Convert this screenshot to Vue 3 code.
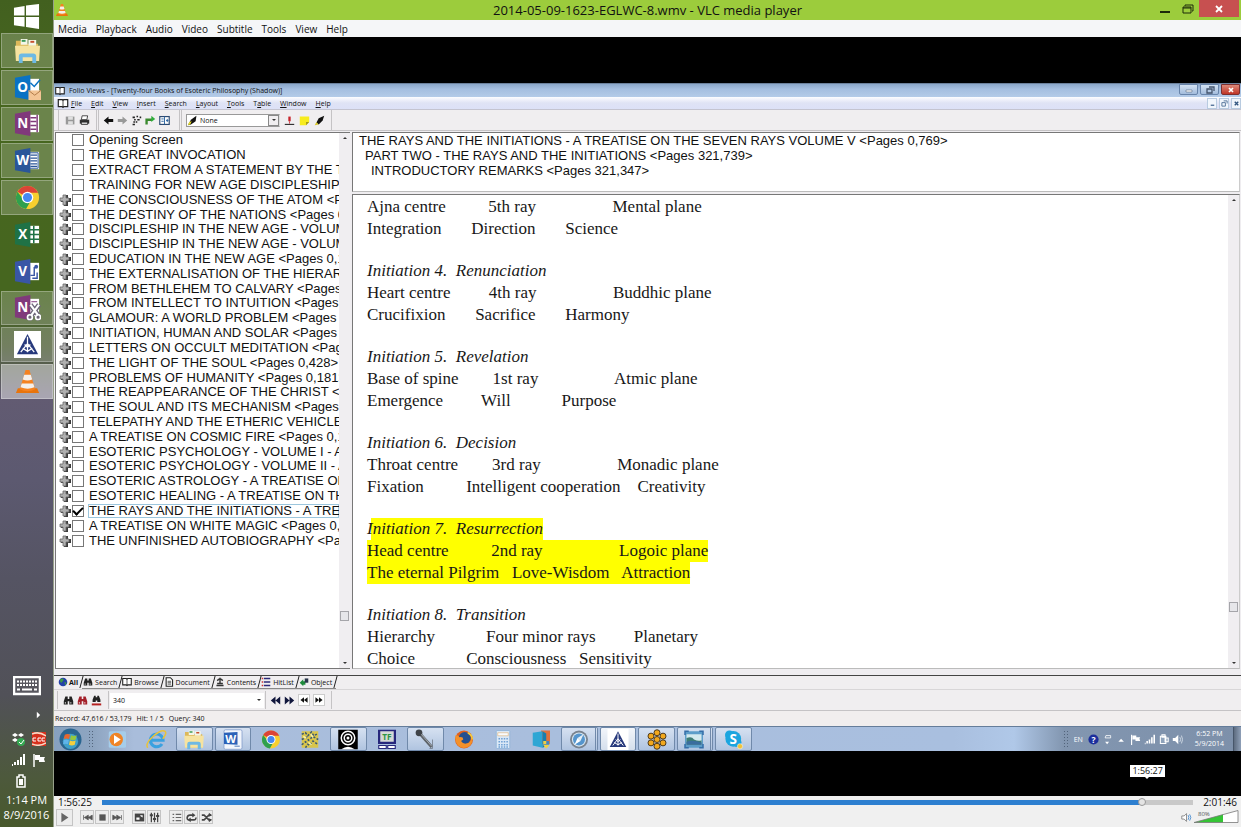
<script setup>
import { ref } from 'vue'

const tri = '<rect width="28" height="28" fill="#fff"/><path d="M14 3 25 24H3Z" fill="#27397c"/><path d="M14 6v16M14 13 7 22M14 13l7 9M9 18l5 3 5-3M11 14l3 3 3-3" stroke="#fff" stroke-width="1.3" fill="none"/>'
const cone = '<path d="M4 21h20l2 5H2Z" fill="#e8740c"/><path d="M12 2h4l6 20q-8 4-16 0Z" fill="#f58220"/><path d="M10.600 7h6.800l1.500 5q-5 2-9.800 0ZM8 16h12l1.200 4q-7 3-14.400 0Z" fill="#f4f0ec"/>'
const chrome = '<circle cx="14" cy="14" r="12" fill="#f7cf2e"/><path d="M14 14 3.600 8A12 12 0 0 1 24.400 8L25 9H14Z" fill="#dc4437"/><path d="M3.600 8A12 12 0 0 0 12.500 26L17.500 17 14 14 9 15Z" fill="#30a04e"/><circle cx="14" cy="14" r="6" fill="#fff"/><circle cx="14" cy="14" r="4.700" fill="#4688f1"/>'
const folder = '<path d="M2 4h8l2 3h13v18H2Z" fill="#dcb85a"/><path d="M7 2h7v6H7zM15 3h8v6h-8z" fill="#f4f6e8"/><path d="M8 3h4v2H8z" fill="#3c9a58"/><path d="M17 4h4v2h-4z" fill="#c8502e"/><path d="M1 9h26l-1 16H2Z" fill="#f6e3a0"/><path d="M5 27v-7q0-3 3-3h12q3 0 3 3v7h-4v-6H9v6Z" fill="#6db9e4"/>'
const office = (c, l, extra) => `<path d="M15 5h11v18H15z" fill="#fff"/>${extra}<path d="M1 4 17 1v26L1 24Z" fill="${c}"/><text x="9" y="19" font-size="14" font-weight="700" text-anchor="middle" fill="#fff">${l}</text>`
const lines = (c) => `<path d="M16 6h9v16h-9" stroke="${c}" fill="none"/><path d="M17 8.500h7M17 11.500h7M17 14.500h7M17 17.500h7M17 20h7" stroke="${c}" stroke-width="1.300"/>`
const cut = 'm17 11 8 11M26 11l-8 11'

const dock = [
  { n: 'File Explorer', on: true, s: folder },
  { n: 'Outlook', on: true, s: office('#0a72c4', 'O', '<path d="m17 9 4 4 6-7" stroke="#0a72c4" stroke-width="1.500" fill="none"/>') + '<path d="M15 17h13v10H15z" fill="#f3c595"/><path d="m15 17 6.500 5 6.500-5" stroke="#b07a48" fill="none"/>' },
  { n: 'OneNote', on: true, s: office('#80397b', 'N', '<path d="M17 8h6M17 12h6M17 16h6M17 20h6M24 5v18" stroke="#80397b" stroke-width="1.500"/>') },
  { n: 'Word', on: true, s: office('#2a5699', 'W', lines('#2a5699')) },
  { n: 'Chrome', on: true, s: chrome },
  { n: 'Excel', on: false, s: office('#1f7246', 'X', '<path d="M15 9h11M15 14h11M15 19h11M20.500 5v18" stroke="#1f7246" stroke-width="1.600"/>') },
  { n: 'Visio', on: false, s: office('#3956a6', 'V', '<path d="M17 18h4v-8h3M19 21h5v-6" stroke="#3956a6" stroke-width="1.500" fill="none"/><circle cx="23" cy="9" r="2" fill="#3956a6"/>') },
  { n: 'OneNote Clipper', on: true, s: office('#80397b', 'N', '<path d="M18 8h6" stroke="#80397b"/>') + `<path d="${cut}" stroke="#6d6578" stroke-width="5"/><circle cx="16.500" cy="24" r="3.500" fill="#6d6578"/><circle cx="25" cy="24" r="3.500" fill="#6d6578"/><path d="${cut}" stroke="#fff" stroke-width="2.200"/><circle cx="16.500" cy="24" r="2.500" fill="none" stroke="#fff" stroke-width="1.700"/><circle cx="25" cy="24" r="2.500" fill="none" stroke="#fff" stroke-width="1.700"/>` },
  { n: 'Folio Views', on: true, s: tri },
  { n: 'VLC', on: true, hot: true, s: cone }
]

const tasks = [
  { n: 'Media Player', s: '<rect x="3" y="3" width="23" height="22" rx="2" fill="#a5cdea"/><circle cx="13" cy="14" r="9" fill="#ef8427"/><path d="m10 8 9 6-9 6Z" fill="#fff"/>' },
  { n: 'Internet Explorer', s: '<path d="M22 20a8.500 8.500 0 1 1 1.500-5H8" fill="none" stroke="#3aa1e0" stroke-width="4"/><path d="M3 25Q-1 20 10 10T26 3Q29 6 23 13" fill="none" stroke="#e8c23c" stroke-width="2"/>' },
  { n: 'Explorer', on: true, s: folder },
  { n: 'Word', on: true, s: '<rect x="2" y="1" width="24" height="26" rx="2" fill="#f2f6fc" stroke="#7d98c8"/><path d="M2 5 20 4v17L2 20Z" fill="#2c62b8"/><text x="11" y="18" font-size="15" font-weight="700" text-anchor="middle" fill="#fff">W</text><path d="M16 23h7" stroke="#87a5d2" stroke-width="2"/>' },
  { n: 'Chrome', s: chrome },
  { n: 'Map', s: '<rect x="3" y="3" width="22" height="22" fill="#d9c54c"/><path d="m3 7 5-2 3 4 5-5 3 5 6-3M3 14l6-3 3 4 6-5 7 4M3 21l5-4 5 5 5-6 7 5M8 25l3-5" stroke="#3c5a72" stroke-width="2" stroke-dasharray="3 2" fill="none"/><path d="m5 10 4 2m6-5 3 4m-6 7 4 3" stroke="#f8f2a8" stroke-width="2"/>' },
  { n: 'Webcam', on: true, s: '<rect x="1" y="1" width="26" height="26" fill="#000"/><circle cx="14" cy="12" r="9" fill="none" stroke="#fff" stroke-width="2"/><circle cx="14" cy="12" r="5" fill="none" stroke="#fff" stroke-width="2"/><circle cx="14" cy="12" r="2" fill="#fff"/><path d="M5 27q9-7 18 0" fill="#fff"/>' },
  { n: 'TF', s: '<rect x="2" y="1" width="24" height="19" fill="#27277c"/><rect x="5" y="3" width="18" height="14" fill="#d5d9d6"/><text x="14" y="14.500" font-size="11" font-weight="700" text-anchor="middle" fill="#2c9443">TF</text><path d="M3 22h10v4H3zM15 22h10v4H15z" fill="#fff" stroke="#27277c" stroke-width="1.500"/>' },
  { n: 'Microphone', on: true, s: '<path d="m7 6 16 18" stroke="#5d6268" stroke-width="4"/><circle cx="6" cy="5" r="4.500" fill="#3f4348"/><path d="m9 7 14 16" stroke="#a5abb2" stroke-width="1.300"/><path d="M24 14v12h-4" stroke="#6c7480" fill="none"/>' },
  { n: 'Firefox', s: '<circle cx="14" cy="14" r="12" fill="#e2601c"/><circle cx="15" cy="12" r="8" fill="#25508f"/><path d="M3 8q3 0 5 3 5-1 5 3l-3 2q3 5 9 3 5-2 5-9 3 8-3 13-9 5-15-1-5-6-3-14" fill="#f4912a"/><path d="M19 5q6 3 6 9" stroke="#f8ce39" stroke-width="2" fill="none"/>' },
  { n: 'Calculator', s: '<rect x="5" y="2" width="18" height="24" rx="1" fill="#dbe8f6" stroke="#8bb0d6"/><path d="M7 5h14v4H7z" fill="#f8fbfe" stroke="#e0a860" stroke-width=".7"/><path d="M8 13h13M8 17h13M8 21h13M8 24h13" stroke="#6d9fd4" stroke-width="2" stroke-dasharray="2 1.500"/>' },
  { n: 'Setup', s: '<path d="M14 2h12v18H14z" fill="#e0733c"/><path d="m3 5 13-2v22L3 22Z" fill="#2ea6d4"/><path d="m16 3 5 3v17l-5 2Z" fill="#187fae"/><path d="M17 16h8v5q-1 3-4 5-3-2-4-5Z" fill="#f0cf45"/><path d="M21 16h4v5h-8v-1h4Z" fill="#4285c4"/>' },
  { n: 'Safari', on: true, stack: true, s: '<circle cx="14" cy="14" r="12" fill="#79838f"/><circle cx="14" cy="14" r="9.500" fill="#d7e6f2"/><circle cx="14" cy="14" r="8" fill="#5595cd"/><path d="m20 7-4 9-4-4Z" fill="#e5eef4"/><path d="m8 21 4-9 4 4Z" fill="#fff"/>' },
  { n: 'Folio Views', on: true, hot: true, s: tri },
  { n: 'GoToMeeting', on: true, s: '<g fill="#f2a81d" stroke="#49371c" stroke-width="1.300"><circle cx="14" cy="5" r="4"/><circle cx="22" cy="9.500" r="4"/><circle cx="22" cy="18.500" r="4"/><circle cx="14" cy="23" r="4"/><circle cx="6" cy="18.500" r="4"/><circle cx="6" cy="9.500" r="4"/><circle cx="14" cy="14" r="4"/></g>' },
  { n: 'Pictures', on: true, stack: true, s: '<rect x="2" y="3" width="24" height="22" fill="#5c9dc9"/><path d="M4 7h20v14H4z" fill="#d3e9ee"/><path d="M4 12q7-3 10 2 6 3 10 1v6H4Z" fill="#3d7d75"/><path d="M4 17q8-3 20 1v3H4Z" fill="#3a6d9e"/><path d="M2 8V3h5M21 3h5v5M26 20v5h-5M7 25H2v-5" fill="none" stroke="#356ea8" stroke-width="2"/>' },
  { n: 'Skype', on: true, s: '<circle cx="13" cy="13" r="10.500" fill="#1ba5df"/><circle cx="8" cy="8" r="6" fill="#1ba5df"/><circle cx="18" cy="18" r="6" fill="#1ba5df"/><text x="13" y="19.500" font-size="18" font-weight="700" text-anchor="middle" fill="#fff">S</text><circle cx="22" cy="23" r="3.500" fill="#f0c33b" stroke="#fff" stroke-width=".6"/>' }
]

const vlcMenu = ['Media', 'Playback', 'Audio', 'Video', 'Subtitle', 'Tools', 'View', 'Help']
const folioMenu = ['File', 'Edit', 'View', 'Insert', 'Search', 'Layout', 'Tools', 'Table', 'Window', 'Help']

const books = ref([
  ['Opening Screen', 0], ['THE GREAT INVOCATION', 0], ['EXTRACT FROM A STATEMENT BY THE T', 0], ['TRAINING FOR NEW AGE DISCIPLESHIP', 0],
  ['THE CONSCIOUSNESS OF THE ATOM <P', 1], ['THE DESTINY OF THE NATIONS <Pages 0', 1],
  ['DISCIPLESHIP IN THE NEW AGE - VOLUME I', 1], ['DISCIPLESHIP IN THE NEW AGE - VOLUME II', 1],
  ['EDUCATION IN THE NEW AGE <Pages 0,1', 1], ['THE EXTERNALISATION OF THE HIERARC', 1],
  ['FROM BETHLEHEM TO CALVARY <Pages', 1], ['FROM INTELLECT TO INTUITION <Pages 0', 1],
  ['GLAMOUR: A WORLD PROBLEM <Pages', 1], ['INITIATION, HUMAN AND SOLAR <Pages 0', 1],
  ['LETTERS ON OCCULT MEDITATION <Pag', 1], ['THE LIGHT OF THE SOUL <Pages 0,428>', 1],
  ['PROBLEMS OF HUMANITY <Pages 0,181>', 1], ['THE REAPPEARANCE OF THE CHRIST <P', 1],
  ['THE SOUL AND ITS MECHANISM <Pages 0', 1], ['TELEPATHY AND THE ETHERIC VEHICLE', 1],
  ['A TREATISE ON COSMIC FIRE <Pages 0,1', 1], ['ESOTERIC PSYCHOLOGY - VOLUME I - A', 1],
  ['ESOTERIC PSYCHOLOGY - VOLUME II - A', 1], ['ESOTERIC ASTROLOGY - A TREATISE ON', 1],
  ['ESOTERIC HEALING - A TREATISE ON TH', 1], ['THE RAYS AND THE INITIATIONS - A TREA', 1],
  ['A TREATISE ON WHITE MAGIC <Pages 0,', 1], ['THE UNFINISHED AUTOBIOGRAPHY <Pag', 1]
].map(([t, e], i) => ({ t, e, c: i === 25 })))

const row = (...p) => p.map((x) => (typeof x === 'number' ? ' '.repeat(x) : x)).join('')
const doc = [
  { l: [row('Ajna centre', 10, '5th ray', 18, 'Mental plane'), row('Integration', 7, 'Direction', 7, 'Science')] },
  { h: 'Initiation 4.  Renunciation', l: [row('Heart centre', 9, '4th ray', 18, 'Buddhic plane'), row('Crucifixion', 7, 'Sacrifice', 7, 'Harmony')] },
  { h: 'Initiation 5.  Revelation', l: [row('Base of spine', 8, '1st ray', 18, 'Atmic plane'), row('Emergence', 9, 'Will', 12, 'Purpose')] },
  { h: 'Initiation 6.  Decision', l: [row('Throat centre', 8, '3rd ray', 18, 'Monadic plane'), row('Fixation', 10, 'Intelligent cooperation', 4, 'Creativity')] },
  { h: 'Initiation 7.  Resurrection', y: true, l: [row('Head centre', 10, '2nd ray', 18, 'Logoic plane'), row('The eternal Pilgrim', 3, 'Love-Wisdom', 3, 'Attraction')] },
  { h: 'Initiation 8.  Transition', l: [row('Hierarchy', 12, 'Four minor rays', 9, 'Planetary'), row('Choice', 12, 'Consciousness', 3, 'Sensitivity')] }
]

const book = '<path d="M1 2h5l1 1 1-1h5v9H8l-1 1-1-1H1Z" fill="#fff" stroke="#222" stroke-width="1.500"/><path d="M7 3v9" stroke="#222"/>'
const bino = (c) => `<path d="M3 2h3v3h2V2h3l2 6v4H8V8H6v4H1V8Z" fill="${c}"/><path d="M3 9v2M10 9v2" stroke="#fff"/>`
const tabs = [
  { t: 'All', s: '<circle cx="7" cy="7" r="6" fill="#2440a8"/><path d="M3 3q4-2 5 1L5 8 3 7ZM9 7l3 1-2 4Z" fill="#3d9a44"/>' },
  { t: 'Search', s: bino('#222') },
  { t: 'Browse', s: book },
  { t: 'Document', s: '<path d="M3 1h6l3 3v9H3Z" fill="#fff" stroke="#222" stroke-width="1.500"/><path d="M5 6h5M5 8h5M5 10h5" stroke="#222"/>' },
  { t: 'Contents', s: '<path d="M7 1v7M3 5l4-3 4 3M3 9h8M2 12h10" stroke="#333" stroke-width="2" fill="none"/>' },
  { t: 'HitList', s: '<path d="M4 2h9M4 7h9M4 12h9" stroke="#2b2b78" stroke-width="2"/><path d="M1 2h2M1 7h2M1 12h2" stroke="#c33" stroke-width="2"/>' },
  { t: 'Object', s: '<path d="m1 8 5-5v3h3v5H6v2Z" fill="#1d8a3b"/><path d="M8 2h5v6H8z" fill="#29364a"/>' }
]
const queryIcons = [['Search', bino('#222')], ['Clear search', bino('#a3202a')], ['Advanced search', '<path d="M4 1h2v2h2V1h2l2 5v3H8V7H6v2H2V6Z" fill="#222"/><path d="M1 12h12" stroke="#b52020" stroke-width="2.500"/>']]
const hitIcons = [
  ['Previous', false, '<path d="M7 2v10L1 7ZM13 2v10L7 7Z" fill="#10163c"/>'], ['Next', false, '<path d="M1 2v10l6-5ZM7 2v10l6-5Z" fill="#10163c"/>'],
  ['First', true, '<path d="M7 3v8L2 7ZM12 3v8L7 7Z" fill="#111"/>'], ['Last', true, '<path d="M2 3v8l5-4ZM7 3v8l5-4Z" fill="#111"/>']
]
const navIcons = [
  ['Back', '<path d="M7 2v3h6v4H7v3L1 7Z" fill="#111"/>'], ['Forward', '<path d="M7 2v3H1v4h6v3l6-5Z" fill="#999"/>'],
  ['Trail', '<path d="M2 3h3M7 2h2M11 3h2M4 6h2M8 6h3M6 9h2M3 9h2M2 12h3" stroke="#222" stroke-width="2"/>'],
  ['Return', '<path d="M2 12V6h7" stroke="#3b8a2f" stroke-width="3" fill="none"/><path d="M8 1v8l5-4Z" fill="#2fae3c"/>'],
  ['Split', '<rect x="1" y="2" width="12" height="10" fill="#fff" stroke="#2c4a72" stroke-width="1.500"/><path d="M7 2v10M3 5h3M3 8h3M9 7h3M10.500 5v4" stroke="#2c64a0" stroke-width="1.200"/>']
]
const playBtns = [
  ['Previous', '<path d="M2 4v6M8 4v6L3 7ZM13 4v6L8 7Z" fill="#555" stroke="#555"/>'],
  ['Stop', '<path d="M3 3h8v8H3z" fill="#555"/>'],
  ['Next', '<path d="M12 4v6M1 4v6l5-3ZM6 4v6l5-3Z" fill="#555" stroke="#555"/>'],
  ['Fullscreen', '<path d="M1 2h12v10H1z" fill="#444"/><path d="M3 7h4v3H3zM8 4h3v3L8 5z" fill="#fff"/>'],
  ['Extended settings', '<path d="M3 1v12M7 1v12M11 1v12" stroke="#444" stroke-width="1.600"/><path d="M1 4h4M5 9h4M9 5h4" stroke="#444" stroke-width="2.500"/>'],
  ['Playlist', '<path d="M2 3h2M2 7h2M2 11h2M6 3h7M6 7h7M6 11h7" stroke="#666" stroke-width="1.500"/>'],
  ['Loop', '<path d="M10 10H4Q1 10 1.500 7T5 4h5M4 10h6q3 0 2.500-3" fill="none" stroke="#444" stroke-width="2"/><path d="M8 1v6l4-3ZM6 7v6l-4-3Z" fill="#444"/>'],
  ['Random', '<path d="M1 4h3l6 6h3M1 10h3l6-6h3" fill="none" stroke="#444" stroke-width="2"/><path d="M10 1v5l4-2ZM10 8v5l4-3Z" fill="#444"/>']
]
const wifi = '<path d="M1 12h1M4 12v-3M7 12V7M10 12V4M13 12V1" stroke="#fff" stroke-width="2"/>'
const flag = '<path d="M2 1v13" stroke="#fff" stroke-width="1.500"/><path d="M3 2h5v2h5l-1 2 1 3H7V7H3Z" fill="#fff"/>'
const tray = [
  ['Network', wifi], ['Action center', flag]
]
const remoteTray = [
  ['Action center', flag], ['Network', wifi],
  ['Clipboard', '<path d="M3 3h7v9H3zM5 1h4v3H5zM9 5h4v5H9z" fill="#8fa3bb" stroke="#fff" stroke-width="1.300"/>'],
  ['Volume', '<path d="M1 5h3l4-4v12L4 9H1Z" fill="#fff"/><path d="M10 4q2 3 0 6M12 2q3 5 0 10" fill="none" stroke="#dfe7ef"/>']
]
const style = ref('None')
const query = ref('340')
const position = ref(6985)
const volume = ref(80)
</script>

<template>
  <div class="desktop">
    <aside class="side">
      <button class="start" aria-label="Start"><svg viewBox="0 0 28 28"><path d="m1 5 11-2v10H1ZM13.500 2.700 27 1v12H13.500ZM1 14.500h11v10L1 23ZM13.500 14.500H27V27l-13.500-2Z" fill="#fff" /></svg></button>
      <nav class="dock" aria-label="Pinned programs">
        <button v-for="d in dock" :key="d.n" :class="{ on: d.on, hot: d.hot }" :aria-label="d.n"><svg viewBox="0 0 28 28" v-html="d.s"></svg></button>
      </nav>
      <div class="side-foot">
        <button class="keys" aria-label="Touch keyboard"><svg viewBox="0 0 28 20"><rect x="1" y="1" width="26" height="17" fill="#58575f" stroke="#fff" stroke-width="2.500" /><path d="M4 5.500h20M4 9h20" stroke="#fff" stroke-width="2" stroke-dasharray="2 1" /><path d="M4 13.500h3M9 13.500h10M21 13.500h3" stroke="#fff" stroke-width="2" /></svg></button>
        <button class="more" aria-label="Show hidden icons"><svg viewBox="0 0 6 8"><path d="m1 0 4 4-4 4Z" fill="#fff" /></svg></button>
        <div class="pair">
          <button aria-label="Dropbox"><svg viewBox="0 0 14 14"><path d="m4 1 3 2-3 2-3-2ZM10 1l3 2-3 2-3-2ZM4 6l3 2-3 2-3-2Z" fill="#fff" /><circle cx="10" cy="10" r="4" fill="#35a852" /><path d="m8 10 2 2 3-4" stroke="#fff" fill="none" /></svg></button>
          <button aria-label="Graphics control"><svg viewBox="0 0 14 14"><rect width="14" height="14" fill="#d5301c" /><path d="M0 2q7-3 14 2M0 12q7 3 14-1" stroke="#f8d9c5" stroke-width="1.500" fill="none" /><path d="M4 6H1v3h3M9 6H6v3h3M13 6h-3v3h3" stroke="#fff" fill="none" /></svg></button>
        </div>
        <div class="pair">
          <button v-for="t in tray" :key="t[0]" :aria-label="t[0]"><svg viewBox="0 0 14 14" v-html="t[1]"></svg></button>
        </div>
        <button class="battery" aria-label="Battery"><svg viewBox="0 0 10 14"><path d="M3 1h4v2h2v10H1V3h2Z" fill="none" stroke="#fff" stroke-width="1.500" /><path d="M3 5h4v6H3z" fill="#fff" /></svg></button>
        <time class="clock"><span>1:14 PM</span><span>8/9/2016</span></time>
      </div>
    </aside>

    <main class="vlc">
      <header class="titlebar">
        <svg class="cone" viewBox="0 0 28 28" v-html="cone"></svg>
        <h1>2014-05-09-1623-EGLWC-8.wmv - VLC media player</h1>
        <div class="winbtns">
          <button aria-label="Minimize"><svg viewBox="0 0 12 10"><path d="M1 8h10" stroke="#1c2a0a" stroke-width="2" /></svg></button>
          <button aria-label="Restore"><svg viewBox="0 0 12 10"><path d="M3 2V1h8v6h-1" fill="none" stroke="#1c2a0a" /><path d="M1 3h8v6H1z" fill="none" stroke="#1c2a0a" /><path d="M1 4h8" stroke="#1c2a0a" /></svg></button>
          <button class="close" aria-label="Close"><svg viewBox="0 0 12 10"><path d="m3 2 6 6M9 2 3 8" stroke="#fff" stroke-width="1.800" /></svg></button>
        </div>
      </header>
      <nav class="vmenu" aria-label="Player menu"><button v-for="m in vlcMenu" :key="m">{{ m }}</button></nav>

      <section class="video">
        <div class="folio-title">
          <svg viewBox="0 0 14 14" v-html="book"></svg>
          <h2>Folio Views - [Twenty-four Books of Esoteric Philosophy (Shadow)]</h2>
          <div class="aero">
            <button aria-label="Minimize Folio"><svg viewBox="0 0 14 8"><path d="M4 4h6v2H4z" fill="#fff" stroke="#5a6c85" stroke-width=".6" /></svg></button>
            <button aria-label="Restore Folio"><svg viewBox="0 0 14 8"><path d="M6 1h5v4M4 3h5v4H4z" fill="none" stroke="#44546c" stroke-width="1.300" /></svg></button>
            <button class="x" aria-label="Close Folio"><svg viewBox="0 0 14 8"><path d="m5 2 4 4M9 2 5 6" stroke="#fff" stroke-width="1.700" /></svg></button>
          </div>
        </div>
        <nav class="folio-menu" aria-label="Folio menu">
          <svg viewBox="0 0 14 14" v-html="book"></svg>
          <button v-for="m in folioMenu" :key="m"><u>{{ m === 'Table' ? '' : m[0] }}</u>{{ m === 'Table' ? 'T' : m.slice(1) }}<template v-if="m === 'Table'"><u>a</u>ble</template></button>
          <span class="grow"></span>
          <button class="mdi" aria-label="Minimize document"><svg viewBox="0 0 8 8"><path d="M2 6h4" stroke="#4a6c94" stroke-width="1.500" /></svg></button>
          <button class="mdi" aria-label="Restore document"><svg viewBox="0 0 8 8"><path d="M3 1h4v3M1 3h4v4H1z" fill="none" stroke="#4a6c94" /></svg></button>
          <button class="mdi" aria-label="Close document"><svg viewBox="0 0 8 8"><path d="m2 2 4 4M6 2 2 6" stroke="#31557f" stroke-width="1.600" /></svg></button>
        </nav>
        <div class="toolbar">
          <div class="group first">
            <button aria-label="Save"><svg viewBox="0 0 14 14"><path d="M1 2h11v10H1z" fill="#999" /><path d="M4 2h6v4H4zM4 8h6v4H4z" fill="#e0e0e0" /></svg></button>
            <button aria-label="Print"><svg viewBox="0 0 14 14"><path d="M4 1h7l-1 5H3Z" fill="#fff" stroke="#222" /><path d="M1 6h12v5H1z" fill="#333" /><path d="M3 9h8v3H3z" fill="#ddd" stroke="#222" /></svg></button>
          </div>
          <div class="group nav"><button v-for="n in navIcons" :key="n[0]" :aria-label="n[0]"><svg viewBox="0 0 14 14" v-html="n[1]"></svg></button></div>
          <div class="group">
            <div class="combo">
              <svg viewBox="0 0 14 14"><path d="M1 13 5 6l7-5-1 7-6 4Z" fill="#111" /><path d="m1 13 3-1 2-4-3 1Z" fill="#e8dc2a" /></svg>
              <select v-model="style" aria-label="Highlighter style"><option>None</option></select>
              <span class="arrow" aria-hidden="true"><i class="down"></i></span>
            </div>
            <button aria-label="Bookmark"><svg viewBox="0 0 14 14"><path d="M1 12h12" stroke="#333" stroke-width="1.500" /><path d="M7 2v6" stroke="#c8242c" stroke-width="3" /><path d="M7 8v3" stroke="#c8242c" /></svg></button>
            <button aria-label="Note"><svg viewBox="0 0 14 14"><path d="M1 2h12v7l-4 4H1Z" fill="#f7ec1e" /><path d="M13 9H9v4Z" fill="#a49a1c" /></svg></button>
            <button aria-label="Highlighter"><svg viewBox="0 0 14 14"><path d="m3 10 3-6 7-3-2 6-5 5Z" fill="#111" /><path d="m1 13 2-4 3 3Z" fill="#d8c82c" /></svg></button>
          </div>
        </div>

        <div class="work">
          <div class="tree">
            <ul>
              <li v-for="b in books" :key="b.t">
                <button v-if="b.e" class="plus" :aria-label="'Expand ' + b.t"><svg viewBox="0 0 12 12"><path d="M5 1h4v3h3v4H9v4H5V8H2V4h3Z" fill="#3c3c3c" /><path d="M4 1h3v3h3v3H7v4H4V7H1V4h3Z" fill="#b0b0b0" stroke="#6a6a6a" stroke-width=".8" /></svg></button>
                <span v-else></span>
                <label :class="{ cur: b.c }"><input v-model="b.c" type="checkbox" /><span>{{ b.t }}</span></label>
              </li>
            </ul>
            <div class="scroll"><i class="up"></i><b></b><i class="down"></i></div>
          </div>
          <div class="reader">
            <div class="crumbs">
              <p>THE RAYS AND THE INITIATIONS - A TREATISE ON THE SEVEN RAYS VOLUME V &lt;Pages 0,769&gt;</p>
              <p>PART TWO - THE RAYS AND THE INITIATIONS &lt;Pages 321,739&gt;</p>
              <p>INTRODUCTORY REMARKS &lt;Pages 321,347&gt;</p>
            </div>
            <div class="page">
              <article>
                <section v-for="(s, i) in doc" :key="i" :class="{ marked: s.y }">
                  <h3 v-if="s.h"><span>{{ s.h }}</span></h3>
                  <p v-for="l in s.l" :key="l"><span>{{ l }}</span></p>
                </section>
              </article>
              <div class="scroll"><i class="up"></i><b></b><i class="down"></i></div>
            </div>
          </div>
        </div>

        <nav class="tabs" aria-label="Views"><button v-for="(t, i) in tabs" :key="t.t" :class="{ sel: !i }"><svg viewBox="0 0 14 14" v-html="t.s"></svg><span>{{ t.t }}</span></button></nav>
        <div class="query">
          <div class="group qa"><button v-for="q in queryIcons" :key="q[0]" :aria-label="q[0]"><svg viewBox="0 0 14 14" v-html="q[1]"></svg></button></div>
          <div class="field"><input v-model="query" aria-label="Query" /><button aria-label="Query history"><i class="down"></i></button></div>
          <div class="group hits"><button v-for="q in hitIcons" :key="q[0]" :class="{ box: q[1] }" :aria-label="q[0]"><svg viewBox="0 0 14 14" v-html="q[2]"></svg></button></div>
        </div>
        <div class="status"><span>Record: 47,616 / 53,179</span><span>Hit: 1 / 5</span><span>Query: 340</span></div>
        <div class="taskbar">
          <button class="orb" aria-label="Windows start"><svg viewBox="0 0 24 24"><circle cx="12" cy="12" r="11.500" fill="#2a6590" /><circle cx="12" cy="14" r="8" fill="#3fa0c8" /><path d="M6 7q3-1.500 5.500 0l-1 4.500q-3-1-5.500 0Z" fill="#e8662d" /><path d="M12.500 7.500q3 1.500 6 0l-1 4.500q-3 1.500-6 0Z" fill="#95c83d" /><path d="M5 12.500q3-1 5.300 0l-1 4.500q-2.500-1-5 0Z" fill="#5fb4ea" /><path d="M11.400 13q3 1.500 6 0l-1 4.500q-3 1.500-6 0Z" fill="#f6cf3c" /></svg></button>
          <span class="grip"></span>
          <div class="apps"><button v-for="t in tasks" :key="t.n" :class="{ on: t.on, hot: t.hot, stack: t.stack }" :aria-label="t.n"><svg viewBox="0 0 28 28" v-html="t.s"></svg></button></div>
          <div class="notify">
            <span class="grip"></span><span class="lang">EN</span>
            <button aria-label="Help"><svg viewBox="0 0 14 14"><circle cx="7" cy="7" r="6.500" fill="#1c2f9c" /><text x="7" y="11" font-size="11" font-weight="700" text-anchor="middle" fill="#fff">?</text></svg></button>
            <button aria-label="Language options"><svg viewBox="0 0 14 14"><path d="M5 2h6v3H4Z" fill="none" stroke="#fff" /><path d="M4 10h5l-2.500 3Z" fill="#fff" /></svg></button>
            <button aria-label="Hidden icons"><svg viewBox="0 0 14 14"><path d="M3 10h7L6.500 6Z" fill="#fff" /></svg></button>
            <button v-for="(t, i) in remoteTray" :key="i" :aria-label="t[0]"><svg viewBox="0 0 14 14" v-html="t[1]"></svg></button>
            <time><span>6:52 PM</span><span>5/9/2014</span></time>
            <button class="peek" aria-label="Show desktop"></button>
          </div>
        </div>
      </section>

      <footer class="controls">
        <div class="seek">
          <span>1:56:25</span>
          <div class="track">
            <input v-model="position" type="range" min="0" max="7306" aria-label="Position" />
            <output class="tip">1:56:27</output>
          </div>
          <span>2:01:46</span>
        </div>
        <div class="buttons">
          <button class="play" aria-label="Play"><svg viewBox="0 0 14 14"><path d="M3 1v12l9-6Z" fill="#666" /></svg></button>
          <button v-for="p in playBtns" :key="p[0]" :aria-label="p[0]"><svg viewBox="0 0 14 14" v-html="p[1]"></svg></button>
          <span class="grow"></span>
          <button class="mute" aria-label="Mute"><svg viewBox="0 0 14 14"><path d="M1 5h3l3-3v10L4 9H1Z" fill="#fff" stroke="#777" /><path d="M9 4q2 3 0 6M11 3q3 4 0 8" fill="none" stroke="#4f8fd0" stroke-width="1.200" /></svg></button>
          <label class="vol">
            <svg viewBox="0 0 46 14"><path d="M1 12.500 45 .5v12Z" fill="#fff" /><path d="M1 12.500 30 4.500v8Z" fill="#35c435" /><path d="M1 12.500 45 .5v12Z" fill="none" stroke="#777" stroke-width=".8" /></svg>
            <span>{{ volume }}%</span>
            <input v-model="volume" type="range" aria-label="Volume" />
          </label>
        </div>
      </footer>
    </main>
  </div>
</template>

<style>
html, body { margin: 0; background: #000; }
</style>

<style scoped>
* { box-sizing: border-box; }
button { border: 0; padding: 0; margin: 0; background: none; font: inherit; color: inherit; display: flex; align-items: center; justify-content: center; }
svg { display: block; flex: none; font-family: "Open Sans", sans-serif; }
h1, h2, h3, p, ul { margin: 0; padding: 0; font-weight: 400; list-style: none; }
.grow { flex: 1; }
.desktop { display: flex; height: 100vh; font-family: "Open Sans", "Noto Sans", sans-serif; color: #111; overflow: hidden; }

.side { flex: none; width: 54px; display: flex; flex-direction: column; background: linear-gradient(#42601f 0, #47661f 10%, #46661f 35%, #50603a 42%, #625b72 48%, #5c5970 58%, #555463 70%, #515158 84%, #4d593c 94%, #48592c); border-right: 1px solid #97a08a; }
.start { height: 33px; }
.start svg { width: 27px; height: 27px; }
.dock { display: grid; grid-auto-rows: 1fr; gap: 2px; height: 366px; padding: 0 0 0 1px; }
.dock button { border: 1px solid transparent; }
.dock .on { background: rgba(255, 255, 255, .2); border-color: rgba(255, 255, 255, .28); }
.dock .hot { background: rgba(255, 255, 255, .45); }
.dock svg { width: 27px; height: 27px; }
.side-foot { margin-top: auto; display: flex; flex-direction: column; align-items: center; padding-bottom: 5px; color: #fff; }
.keys svg { width: 28px; height: 20px; }
.more { align-self: flex-end; margin: 15px 12px 13px 0; }
.more svg { width: 5px; height: 8px; }
.pair { display: flex; gap: 7px; margin: 0 0 7px 4px; }
.pair svg { width: 14px; height: 14px; }
.battery { margin: 0 11px 4px 0; }
.battery svg { width: 10px; height: 14px; }
.clock { display: grid; justify-items: center; font-size: 11px; line-height: 15px; }

.vlc { flex: 1; min-width: 0; display: flex; flex-direction: column; background: #f0f0f0; }
.titlebar { position: relative; flex: none; height: 20px; background: #9ccc3c; display: flex; align-items: center; justify-content: center; }
.titlebar h1 { font-size: 13px; line-height: 20px; }
.cone { position: absolute; left: 1px; top: 3px; width: 14px; height: 14px; }
.winbtns { position: absolute; right: 2px; top: 0; display: flex; }
.winbtns button { width: 23px; height: 17px; }
.winbtns svg { width: 12px; height: 10px; }
.winbtns .close { width: 40px; background: #c75050; }
.vmenu { flex: none; height: 17px; background: #f5f6f8; display: flex; gap: 9px; padding-left: 4px; font-size: 10px; }

.video { flex: 1; min-height: 0; display: flex; flex-direction: column; background: #000; padding: 46px 0 45px; }
.folio-title { flex: none; height: 14px; display: flex; align-items: center; padding-left: 1px; background: linear-gradient(#8ba7c9, #a5bfe0 40%, #b4cbe8); border-top: 1px solid #6c819c; }
.folio-title > svg { width: 10px; height: 10px; margin-right: 4px; }
.folio-title h2 { font-size: 7px; line-height: 12px; flex: 1; }
.aero { display: flex; gap: 2px; padding-right: 1px; align-self: stretch; }
.aero button { width: 19px; height: 11px; border: 1px solid #6884aa; border-radius: 0 0 2px 2px; background: linear-gradient(#d3e2f3, #a3bcdc); }
.aero svg { width: 14px; height: 8px; }
.aero .x { background: linear-gradient(#dd8878, #c03527); border-color: #7c3030; }
.folio-menu { flex: none; height: 13px; display: flex; align-items: center; gap: 9px; padding-left: 3px; font-size: 7px; background: linear-gradient(#fdfdff, #dfe3f5 50%, #dce1f7); border-bottom: 1px solid #c4c4d0; }
.folio-menu > svg { width: 12px; height: 11px; margin-right: -7px; }
.folio-menu .mdi { width: 10px; height: 11px; border: 1px solid #b8cbe0; background: #f1f6fc; margin-left: -7px; }
.mdi svg { width: 7px; height: 7px; }
.toolbar { flex: none; height: 21px; display: flex; background: #f0eef0; border-bottom: 1px solid #c5c3c5; padding-left: 4px; }
.group { display: flex; align-items: center; gap: 4px; padding: 0 6px 0 4px; border-left: 1px solid #c5c3c5; border-right: 1px solid #c5c3c5; margin-right: 1px; }
.group svg { width: 11px; height: 11px; }
.group.first { gap: 3px; padding: 0 6px; }
.group.nav { gap: 3px; padding-right: 9px; }
.combo { position: relative; display: flex; align-items: center; width: 94px; height: 13px; background: #fff; border: 1px solid #999; border-right-color: #ddd; }
.combo select { appearance: none; border: 0; background: none; padding: 0 0 0 2px; flex: 1; font: 7px "Open Sans", sans-serif; color: #111; }
.combo .arrow { width: 11px; align-self: stretch; border: 1px solid #888; background: #f0eef0; display: grid; place-items: center; pointer-events: none; }

.work { flex: 1; min-height: 0; display: flex; gap: 2px; background: #efedf0; padding: 1px 1px 6px 1px; border-bottom: 1px solid #444; }
.tree { flex: none; width: 295px; display: flex; background: #fff; border: 1px solid #777; border-width: 1px 0 1px 1px; }
.tree ul { flex: 1; min-width: 0; display: grid; grid-auto-rows: 1fr; height: 415px; overflow: hidden; }
li { display: grid; grid-template-columns: 16px 1fr; align-items: center; min-width: 0; min-height: 0; font: 13px/14px "Liberation Sans", Arial, sans-serif; overflow: hidden; }
.plus svg { width: 12px; height: 12px; margin-left: 1px; }
li label { display: flex; align-items: center; gap: 4px; white-space: nowrap; min-width: 0; }
li label span { padding-left: 1px; flex: 1; overflow: hidden; height: 14px; }
li label.cur span { box-shadow: inset 0 0 0 1px #9cc6dd; }
li input { appearance: none; flex: none; width: 12px; height: 12px; margin: 0; border: 1px solid #777; background: #fff; display: grid; place-items: center; }
li input:checked::after { content: ""; width: 8px; height: 4px; border: solid #000; border-width: 0 0 2px 2px; transform: translateY(-1px) rotate(-45deg); }
.scroll { flex: none; width: 11px; display: flex; flex-direction: column; align-items: center; justify-content: space-between; background: #f0eef1; padding: 4px 0; }
.scroll b { width: 9px; height: 10px; border: 1px solid #a5a5aa; background: #e6e6ea; margin-top: auto; margin-bottom: 41px; }
.up, .down { width: 0; height: 0; border: 2px solid transparent; }
.up { border-bottom: 2px solid #333; border-top: 0; }
.down { border-top: 2px solid #333; border-bottom: 0; }
.page .scroll b { margin-bottom: 50px; }
.reader { flex: 1; min-width: 0; display: flex; flex-direction: column; gap: 2px; }
.crumbs, .page { background: #fff; border: 1px solid #777; border-right-color: #ccc; border-bottom-color: #bbb; }
.crumbs { flex: none; height: 60px; padding: 0 0 0 6px; font: 13px/15px "Liberation Sans", Arial, sans-serif; white-space: nowrap; overflow: hidden; }
.crumbs p + p { padding-left: 6px; }
.crumbs p + p + p { padding-left: 12px; }
.page { flex: 1; min-height: 0; display: flex; }
article { flex: 1; min-width: 0; overflow: hidden; padding: 1px 0 0 14px; font: 17px/22px "Liberation Serif", "Times New Roman", serif; white-space: pre; color: #181818; }
article section { margin-bottom: 20px; }
h3 { font-style: italic; font-size: 17px; line-height: 22px; }
article span { display: inline-block; }
.marked span { background: #ffff00; }
.marked h3 span { background: linear-gradient(to right, transparent 4px, #ffff00 4px); }

.tabs { flex: none; height: 13px; display: flex; background: #f0eef0; font-size: 7px; padding-left: 3px; }
.tabs button { gap: 2px; padding: 0 4px 0 1px; position: relative; border-bottom: 1px solid #888; }
.tabs button::after { content: ""; position: absolute; right: 0; top: 0; width: 1px; height: 12px; background: #222; transform: skewX(-15deg); }
.tabs svg { width: 10px; height: 10px; }
.tabs .sel { font-weight: 700; border-color: transparent; gap: 1px; }
.query { flex: none; height: 22px; display: flex; align-items: center; background: #f0eef0; border-bottom: 1px solid #c5c3c5; border-top: 1px solid #d8d6d8; padding-left: 3px; }
.query .group { height: 18px; gap: 3px; }
.query .qa { padding: 0 6px 0 5px; }
.field { display: flex; align-items: center; width: 154px; height: 15px; background: #fff; }
.field input { flex: 1; min-width: 0; border: 0; padding: 0 3px; background: none; font: 7px "Open Sans", sans-serif; color: #111; }
.field button { width: 10px; }
.query .hits { border-left: 1px solid #c5c3c5; margin-left: 1px; padding-left: 4px; }
.hits .box { border: 1px solid #ccc; background: #fff; }
.box svg { width: 10px; height: 10px; }
.status { flex: none; height: 15px; display: flex; align-items: center; gap: 5px; background: #f1eeee; font-size: 7px; padding-left: 1px; }
.taskbar { flex: none; height: 25px; display: flex; align-items: stretch; color: #fff; background: linear-gradient(to right, #86a1bf 0, #8ea5c1 40px, #a9bddb 80px, #a9bfdf 900px, #b0c8e8 960px, #8296b0 1010px, #7d90aa); border-top: 1px solid #657d9a; }
.orb { width: 32px; }
.orb svg { width: 23px; height: 23px; }
.grip { width: 6px; margin: 3px 2px; background: radial-gradient(circle, #52647b 1px, transparent 1px) 0 0 / 3px 3px; }
.apps { display: grid; grid-auto-flow: column; grid-auto-columns: 1fr; column-gap: 2px; width: 653px; margin-left: 3px; }
.apps svg { width: 22px; height: 21px; }
.apps .on { border: 1px solid #7089aa; border-radius: 2px; background: linear-gradient(#d6e1f1, #b0c4e0); }
.apps .hot { background: linear-gradient(#f2f5fa, #d5dfec); }
.apps .stack { border-right: 3px double #7089aa; }
.notify { margin-left: auto; display: flex; align-items: center; gap: 3px; font-size: 7px; }
.notify .grip { align-self: stretch; }
.notify svg { width: 11px; height: 11px; }
.notify .lang { margin-right: 2px; }
.notify time { display: grid; justify-items: center; line-height: 10px; margin: 0 6px 0 9px; }
.peek { align-self: stretch; width: 8px; background: linear-gradient(to right, #5d6c80, #8fa0b8); border-left: 1px solid #47566a; }

.controls { flex: none; height: 31px; display: flex; flex-direction: column; background: #f0f0f0; }
.seek { display: flex; align-items: center; gap: 10px; height: 12px; padding: 0 4px; font-size: 10px; line-height: 12px; }
.track { position: relative; flex: 1; display: flex; }
.track input { appearance: none; flex: 1; width: 100%; height: 5px; margin: 0; background: linear-gradient(to right, #2d7fd0 95.500%, #c9c9c9 95.500%); }
.track input::-webkit-slider-thumb { appearance: none; width: 8px; height: 8px; border-radius: 50%; background: #e4e4e4; border: 1px solid #999; }
.tip { position: absolute; right: 28px; bottom: 28px; width: 35px; height: 12px; background: #fff; font-size: 9px; line-height: 12px; text-align: center; }
.tip::after { content: ""; position: absolute; left: 15px; top: 12px; border: 2px solid transparent; border-top-color: #fff; }
.buttons { display: flex; align-items: center; height: 19px; padding: 0 2px 1px 2px; }
.buttons button { width: 14px; height: 14px; border: 1px solid #c4c4c4; background: #ececec; margin-right: 1px; }
.buttons svg { width: 11px; height: 11px; }
.buttons .play { width: 17px; height: 17px; margin-right: 7px; }
.buttons button:nth-child(4), .buttons button:nth-child(6) { margin-right: 8px; }
.buttons .mute { border: 0; background: none; margin-right: 0; }
.vol { position: relative; width: 46px; height: 14px; }
.vol svg { width: 46px; height: 14px; }
.vol span { position: absolute; left: 5px; top: 0; font-size: 6px; line-height: 8px; color: #555; }
.vol input { position: absolute; inset: 0; width: 100%; margin: 0; opacity: 0; }
</style>
